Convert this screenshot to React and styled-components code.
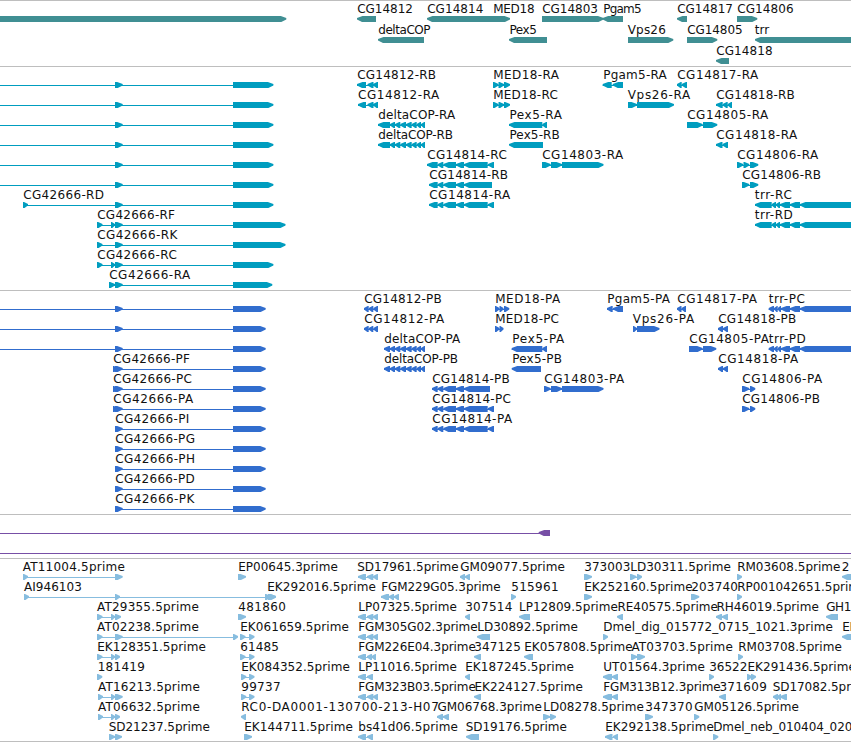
import React from 'react';
import styled, { createGlobalStyle } from 'styled-components';

const WIDTH = 851;

/* every feature is [label, label start, label end, strand, exons]
   exons are [start, end] pairs, a thin line joins the first to the last
   an empty label is a feature that starts left of the window */

const dot = [115, 122.7];
const cut = [-12, -8];
const far = 870;

const rnaEnd = [233, 273.4];
const rnaLong = [233, 285.5];
const rna0 = ['', 0, 0, '+', [cut, dot, rnaEnd]];

const deltaCOP = [[390, 395], [395, 400.3], [400.3, 406], [406, 411.7], [411.7, 416.7], [416.7, 421], [421, 425]];
const med18 = [[493, 498.5], [498.5, 504], [504, 510]];
const trrRna = [[755, 771.7], [771.7, 776], [776, 780], [780, 790], [790, 800], [800, far]];
const cg14814 = [[429, 437.7], [437.7, 443.3], [443.3, 456], [456, 464]];

const genes = [
  [
    ['', 0, 0, '+', [[-12, 286.3]]],
    ['CG14812', 357.5, 412.7, '-', [[357, 376]]],
    ['CG14814', 427.5, 483, '-', [[427, 496]]],
    ['MED18', 493.5, 534.3, '+', [[493, 510]]],
    ['CG14803', 542.5, 597.7, '+', [[542, 603.5]]],
    ['Pgam5', 603.5, 641.3, '-', [[602.7, 623]]],
    ['CG14817', 677.5, 732.7, '-', [[677, 687]]],
    ['CG14806', 737.5, 793.3, '+', [[737, 757.3]]],
  ],
  [
    ['deltaCOP', 378.5, 430.3, '-', [[378, 424]]],
    ['Pex5', 509.7, 536.5, '-', [[509, 547]]],
    ['Vps26', 628, 665.5, '+', [[628, 673.3]]],
    ['CG14805', 687.5, 742.3, '+', [[687, 717.3]]],
    ['trr', 755, 769, '-', [[755, far]]],
  ],
  [['CG14818', 716.5, 772.3, '-', [[716, 729]]]],
];

const transcripts = [
  [
    rna0,
    ['CG14812-RB', 357.5, 435.7, '-', [[357, 366], [367.5, 373.5], [373, 378]]],
    ['MED18-RA', 493.5, 558.7, '+', med18],
    ['Pgam5-RA', 603.5, 666.5, '-', [[602.7, 611.7], [612.7, 623]]],
    ['CG14817-RA', 677.5, 758, '-', [[677, 681.7], [681.7, 687]]],
  ],
  [
    rna0,
    ['CG14812-RA', 358.3, 439, '-', [[358, 366], [367.5, 373.5], [373, 378]]],
    ['MED18-RC', 493.5, 557.5, '+', med18],
    ['Vps26-RA', 628, 690, '+', [[628, 637], [637, 674]]],
    ['CG14818-RB', 716.5, 794.5, '-', [[716, 722.7], [722.7, 727.7], [727.7, 732]]],
  ],
  [
    rna0,
    ['deltaCOP-RA', 378.5, 455, '-', [[378, 390], ...deltaCOP]],
    ['Pex5-RA', 509.7, 561.7, '-', [[509, 542.3], [542.3, 547]]],
    ['CG14805-RA', 687.5, 768, '+', [[687, 702.7], [703, 717.3]]],
  ],
  [
    rna0,
    ['deltaCOP-RB', 378.5, 452.7, '-', [[378, 390], ...deltaCOP]],
    ['Pex5-RB', 509.7, 559.5, '-', [[509, 543]]],
    ['CG14818-RA', 716.5, 797, '-', [[716, 722.5], [722.5, 728]]],
  ],
  [
    rna0,
    ['CG14814-RC', 427.5, 506.5, '-', [[427, 437.7], ...cg14814.slice(1), [464, 487.7], [488, 494]]],
    ['CG14803-RA', 542.5, 623, '+', [[542, 550.7], [551, 562], [562, 603.5]]],
    ['CG14806-RA', 737.5, 818, '+', [[737, 743.3], [743.5, 749.3], [750, 758.3]]],
  ],
  [
    rna0,
    ['CG14814-RB', 429.5, 507.7, '-', [...cg14814, [464, 492]]],
    ['CG14806-RB', 742.5, 820.7, '+', [[742, 749.3], [750, 758.3]]],
  ],
  [
    ['CG42666-RD', 23.5, 103.7, '+', [[23, 28], dot, rnaEnd]],
    ['CG14814-RA', 429.5, 510, '-', [...cg14814, [464, 487.7], [488, 494]]],
    ['trr-RC', 755, 791.5, '-', trrRna],
  ],
  [
    ['CG42666-RF', 97.5, 174.7, '+', [[97, 102.5], [111, 115], dot, rnaLong]],
    ['trr-RD', 755, 792.5, '-', trrRna],
  ],
  [['CG42666-RK', 97.5, 177, '+', [[97, 102.5], dot, rnaLong]]],
  [['CG42666-RC', 97.5, 176.5, '+', [[97, 102.5], [111, 115], dot, rnaEnd]]],
  [['CG42666-RA', 109.5, 190, '+', [[109, 115], dot, [233, 272.3]]]],
];

const cdsEnd = [233, 265.7];
const cds0 = ['', 0, 0, '+', [cut, dot, cdsEnd]];
const cdsWide = [[113, 118], dot, cdsEnd];
const cdsShort = [dot, cdsEnd];
const trrCds = [[768.7, 774], [774, 777.7], [777.7, 781], [781, 790], [790, 800], [800, far]];
const cg14812 = [[364, 368.7], [368.7, 373.3], [373.3, 378]];
const cds14814 = [[432, 437.7], ...cg14814.slice(1)];

const proteins = [
  [
    cds0,
    ['CG14812-PB', 364.5, 441.5, '-', cg14812],
    ['MED18-PA', 495.5, 560, '+', [[495, 499.5], [499.5, 503.5], [504, 509.3]]],
    ['Pgam5-PA', 607.5, 669.7, '-', [[607, 612.7], [613, 623]]],
    ['CG14817-PA', 677.5, 756.7, '-', [[677, 681.5], [681.5, 686]]],
    ['trr-PC', 769, 804.5, '-', trrCds],
  ],
  [
    cds0,
    ['CG14812-PA', 364.5, 444, '-', cg14812],
    ['MED18-PC', 495.5, 558.7, '+', [[495, 499.5], [499.5, 503.5]]],
    ['Vps26-PA', 633, 694, '+', [[633, 637], [637, 659.5]]],
    ['CG14818-PB', 718.5, 796, '-', [[718, 723], [723, 728]]],
  ],
  [
    cds0,
    ['deltaCOP-PA', 384.5, 460, '-', [[384, 390], ...deltaCOP]],
    ['Pex5-PA', 512.5, 564, '-', [[511.7, 542.3], [542.3, 547]]],
    ['CG14805-PA', 689.5, 768.7, '+', [[689, 702.7], [703, 716.3]]],
    ['trr-PD', 769, 805.5, '-', trrCds],
  ],
  [
    ['CG42666-PF', 113.5, 189.7, '+', cdsWide],
    ['deltaCOP-PB', 384.5, 457.7, '-', [[384, 390], ...deltaCOP]],
    ['Pex5-PB', 512.5, 561.7, '-', [[511.7, 541]]],
    ['CG14818-PA', 718.5, 798, '-', [[718, 723], [723, 728]]],
  ],
  [
    ['CG42666-PC', 113.5, 191.7, '+', cdsWide],
    ['CG14814-PB', 432.5, 509.5, '-', [...cds14814, [464, 490]]],
    ['CG14803-PA', 544.5, 624, '+', [[544, 550.7], [551, 562], [562, 603.5]]],
    ['CG14806-PA', 742.5, 822, '+', [[742, 749.3], [750, 755.3]]],
  ],
  [
    ['CG42666-PA', 113.5, 193, '+', cdsWide],
    ['CG14814-PC', 432.5, 510.7, '-', [...cds14814, [464, 487.7], [488, 494]]],
    ['CG14806-PB', 742.5, 819.7, '+', [[742, 749.3], [750, 755.3]]],
  ],
  [
    ['CG42666-PI', 115.5, 189, '+', cdsShort],
    ['CG14814-PA', 432.5, 512, '-', [...cds14814, [464, 487.7], [488, 494]]],
  ],
  [['CG42666-PG', 115.5, 194.7, '+', cdsShort]],
  [['CG42666-PH', 115.5, 194.7, '+', cdsShort]],
  [['CG42666-PD', 115.5, 194.5, '+', cdsShort]],
  [['CG42666-PK', 115.5, 194, '+', cdsShort]],
];

const noncoding = [
  [['', 0, 0, '-', [cut, [538.7, 550]]]],
  [['', 0, 0, '-', [cut, [far, far + 10]]]],
];

const three = [[358, 366], [367, 373.3], [373, 378]];
const ekPair = [[240, 245.5], [249, 254.5]];
const ekPair2 = [[241, 246.3], [249, 254.5]];

const ests = [
  [
    ['AT11004.5prime', 23, 124.5, '+', [[23, 28], dot]],
    ['EP00645.3prime', 238.5, 337.5, '+', [[238, 246]]],
    ['SD17961.5prime', 357.5, 458.3, '-', three],
    ['GM09077.5prime', 460.5, 564.5, '-', [[460, 465], [465, 470]]],
    ['373003', 584.5, 630, '+', [[584, 592]]],
    ['LD30311.5prime', 630.5, 730.5, '+', [[630, 636.5], [637, 642]]],
    ['RM03608.5prime', 737.5, 840, '+', [[737, 742]]],
    ['2', 842, 849, '-', [[842, far]]],
  ],
  [
    ['AI946103', 24.3, 81.5, '+', [[24, 29], [115, 120], [265, 271], [268, 276]]],
    ['EK292016.5prime', 267.5, 375.5, '+', [[268, 276]]],
    ['FGM229G05.3prime', 381.5, 500.3, '-', [[381, 389], [389, 394], [394, 399]]],
    ['515961', 511.5, 558.3, '+', [[511, 516]]],
    ['EK252160.5prime', 584.5, 692.3, '+', [[584, 592]]],
    ['203740', 691.5, 737.7, '+', [[691, 699.3]]],
    ['RP001042651.5prime', 737.5, 867, '+', [[737, 742]]],
  ],
  [
    ['AT29355.5prime', 97.3, 198.5, '+', [[97, 102.5], [111, 115], [115, 121]]],
    ['481860', 238.5, 285.5, '+', [[238, 246]]],
    ['LP07325.5prime', 358.5, 456.5, '-', three],
    ['307514', 465.5, 512, '-', [[465, 470]]],
    ['LP12809.5prime', 519.3, 617.5, '-', [[519, 530]]],
    ['RE40575.5prime', 617.7, 717.5, '-', [[617, 623]]],
    ['RH46019.5prime', 716.7, 818.5, '-', [[716, 722], [722, 728]]],
    ['GH1', 826.5, 851, '-', [[826, 838]]],
  ],
  [
    ['AT02238.5prime', 97.3, 198.5, '+', [[97, 102.5], dot, [233, 238]]],
    ['EK061659.5prime', 240.5, 348.5, '+', ekPair],
    ['FGM305G02.3prime', 358.5, 477.3, '-', three],
    ['LD30892.5prime', 477.5, 577.5, '-', [[477, 490]]],
    ['Dmel_dig_015772_0715_1021.3prime', 603.5, 832.5, '+', [[603, 608]]],
    ['EK', 842.5, 857, '-', [[842, far]]],
  ],
  [
    ['EK128351.5prime', 97.5, 205.5, '+', [[97, 102.5], [111, 115], [115, 120]]],
    ['61485', 240.5, 278.7, '+', ekPair],
    ['FGM226E04.3prime', 358.5, 475.5, '-', [[358, 366], [367, 372], [371.5, 376]]],
    ['347125', 474.5, 520.5, '-', [[474, 481]]],
    ['EK057808.5prime', 524.5, 632.3, '-', [[524, 533]]],
    ['AT03703.5prime', 631.7, 732.5, '+', [[631, 637], [637, 645]]],
    ['RM03708.5prime', 738.5, 841.5, '+', [[738, 743]]],
  ],
  [
    ['181419', 98, 144.5, '+', [[97, 102.3]]],
    ['EK084352.5prime', 241.5, 349.5, '+', ekPair2],
    ['LP11016.5prime', 358.5, 456.5, '-', [[358, 366], [367, 373]]],
    ['EK187245.5prime', 465.5, 573.5, '-', [[465, 470]]],
    ['UT01564.3prime', 603.5, 704.5, '-', [[603, 612], [612, 618]]],
    ['36522', 709.5, 747, '+', [[709, 714]]],
    ['EK291436.5prime', 747.7, 855.5, '+', [[747, 752], [751, 756]]],
  ],
  [
    ['AT16213.5prime', 98.3, 199.5, '+', [[98, 103], [111, 115], dot]],
    ['99737', 241.5, 280.3, '+', ekPair2],
    ['FGM323B03.5prime', 358.5, 475.5, '-', three],
    ['EK224127.5prime', 474.7, 582.5, '-', [[474, 481]]],
    ['FGM313B12.3prime', 603.5, 720.3, '-', [[603, 612], [612, 618]]],
    ['371609', 719.7, 766.5, '-', [[719, 726]]],
    ['SD17082.5prime', 773, 873, '-', [[773, 778], [777, 781], [780, 787]]],
  ],
  [
    ['AT06632.5prime', 98.3, 199.5, '+', [[98, 103], [111, 115], [115, 120]]],
    ['RC0-DA0001-130700-213-H07', 241.5, 438.5, '-', [[241, 246]]],
    ['GM06768.3prime', 437.7, 541.5, '-', [[437, 443], [443, 449]]],
    ['LD08278.5prime', 543.5, 643.5, '+', [[543, 550], [550, 556]]],
    ['347370', 645.5, 692.3, '+', [[645, 653]]],
    ['GM05126.5prime', 694.5, 798.5, '+', [[694, 699.3]]],
  ],
  [
    ['SD21237.5prime', 109, 209.5, '+', [[109, 115], [115, 122]]],
    ['EK144711.5prime', 244.5, 352.5, '+', [[244, 252]]],
    ['bs41d06.5prime', 358.5, 457.5, '-', [[358, 366], [367, 373]]],
    ['SD19176.5prime', 466, 566.5, '-', [[466, 479]]],
    ['EK292138.5prime', 605.5, 713.5, '-', [[605, 612.5], [613, 618]]],
    ['Dmel_neb_010404_020', 713.5, 852, '+', [[713, 718.3]]],
  ],
];

const tracks = [
  { id: 'genes', color: '#408f93', pitch: 21, gap: 0, rows: genes },
  { id: 'transcripts', color: '#009dbf', pitch: 20, gap: 1, rows: transcripts },
  { id: 'proteins', color: '#316dce', pitch: 20, gap: 1, rows: proteins },
  { id: 'noncoding', color: '#774fa6', pitch: 20, gap: 1, rows: noncoding },
  { id: 'ests', color: '#87bddf', pitch: 20, gap: 0, rows: ests },
];

/* box with a blunt point in the direction of the strand */
function arrow([start, end], strand) {
  const size = end - start;
  const tip = Math.min(5.5, size * 0.8);
  if (strand === '+') {
    return `${start},13 ${end - tip},13 ${end},15 ${end},16.5 ${end - tip + 0.5},19 ${start},19`;
  }
  return `${end},13 ${start + tip},13 ${start},15 ${start},16.5 ${start + tip - 0.5},19 ${end},19`;
}

function Feature({ data }) {
  const [label, from, to, strand, exons] = data;
  const first = exons[0][0];
  const last = exons[exons.length - 1][1];

  return (
    <g>
      {label && (
        <Label x={from - 0.3} y='10' textLength={to - from + 0.6}>
          {label}
        </Label>
      )}
      {exons.length > 1 && <rect x={first} y='16' width={last - first - 1} height='1' />}
      {exons.map((exon, i) => (
        <polygon key={i} points={arrow(exon, strand)} />
      ))}
    </g>
  );
}

function App() {
  return (
    <Browser>
      <GlobalStyle />
      {tracks.map((track) => (
        <Track key={track.id} $gap={track.gap}>
          {track.rows.map((row, i) => (
            <Row key={i} $color={track.color} $pitch={track.pitch}>
              <Lane viewBox={`0 0 ${WIDTH} ${track.pitch}`}>
                {row.map((data, j) => (
                  <Feature key={j} data={data} />
                ))}
              </Lane>
            </Row>
          ))}
        </Track>
      ))}
    </Browser>
  );
}

export default App;

const GlobalStyle = createGlobalStyle`
  body {
    margin: 0;
    background: #fff;
    overflow: hidden;
  }
`;

const Browser = styled.main`
  display: flex;
  flex-direction: column;
  width: ${WIDTH}px;
  height: 741px;
  border-bottom: 1px solid #bebebe;
  overflow: hidden;
`;

const Track = styled.section`
  display: flex;
  flex-direction: column;
  border-top: 1px solid #bebebe;
  padding: 2px 0 ${(props) => props.$gap}px;
`;

const Row = styled.div`
  height: ${(props) => props.$pitch}px;
  color: ${(props) => props.$color};
`;

const Lane = styled.svg`
  display: block;
  width: 100%;
  height: 100%;
  fill: currentColor;
  overflow: visible;
`;

const Label = styled.text`
  font-family: 'DejaVu Sans', sans-serif;
  font-size: 12px;
  fill: #111;
`;
